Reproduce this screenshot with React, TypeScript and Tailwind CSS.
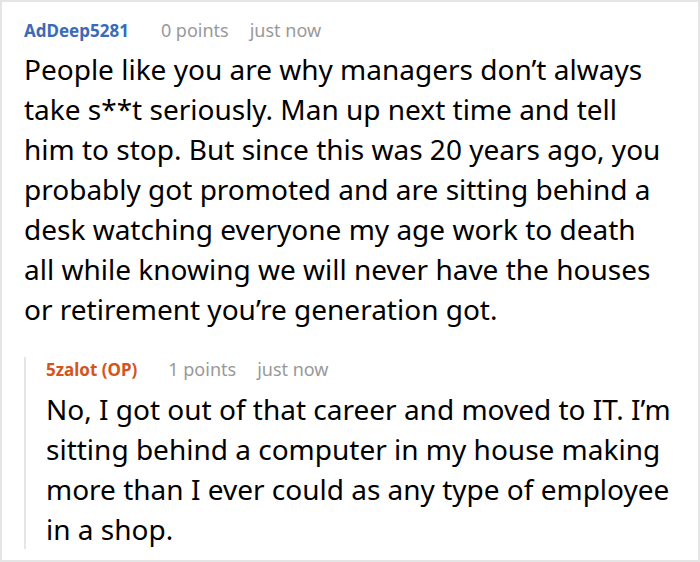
export default function App() {
  return (
    <div
      className="h-[562px] w-[700px] overflow-hidden border-2 border-[#e5e5e5] bg-white text-black"
      style={{ fontFamily: '"Noto Sans", "Open Sans", sans-serif' }}
    >
      <div className="pl-[22px] pt-[16px]">
        <div className="flex items-baseline leading-[24px]">
          <span className="text-[17px] font-bold text-[#3a6bb5]">AdDeep5281</span>
          <span className="ml-[32px] text-[18px] text-[#999999]">0 points</span>
          <span className="ml-[21px] text-[18px] text-[#999999]">just now</span>
        </div>
        <p className="mt-[6px] w-[640px] text-[28px] leading-[40px]">
          People like you are why managers don’t always take s**t seriously. Man up next time and tell
          him to stop. But since this was 20 years ago, you probably got promoted and are sitting
          behind a desk watching everyone my age work to death all while knowing we will never have
          the houses or retirement you’re generation got.
        </p>

        <div className="mt-[28px] border-l-2 border-[#e5e5e5] pl-[20px]">
          <div className="flex items-baseline leading-[24px]">
            <span className="text-[17px] font-bold text-[#d4541c]">5zalot (OP)</span>
            <span className="ml-[31px] text-[18px] text-[#999999]">1 points</span>
            <span className="ml-[21px] text-[18px] text-[#999999]">just now</span>
          </div>
          <p className="mt-[7px] w-[640px] text-[28px] leading-[40px]">
            No, I got out of that career and moved to IT. I’m sitting behind a computer in my house
            making more than I ever could as any type of employee in a shop.
          </p>
        </div>
      </div>
    </div>
  )
}
